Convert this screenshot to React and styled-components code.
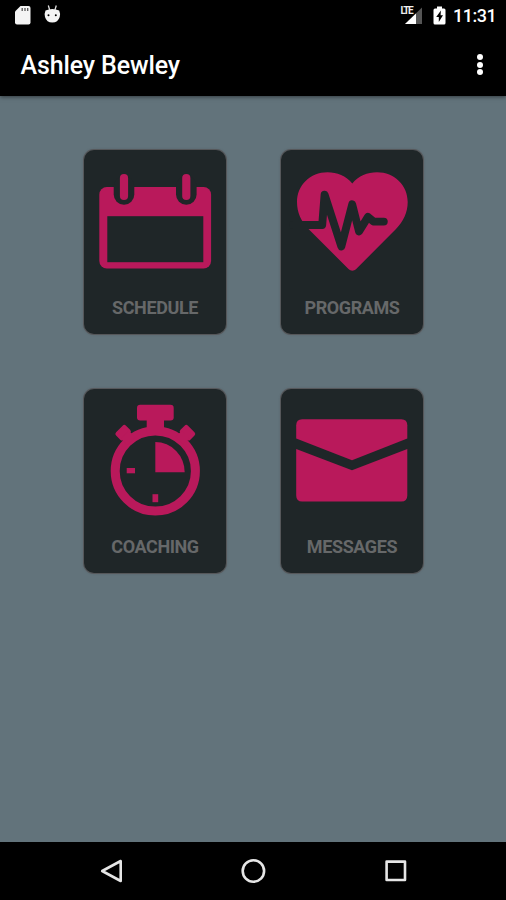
import React from 'react'
import styled, { createGlobalStyle, ThemeProvider } from 'styled-components'

const theme = {
  colors: {
    background: '#62737b',
    card: '#1f2628',
    accent: '#b9195b',
    label: '#666869',
    bar: '#000',
  },
}

const GlobalStyle = createGlobalStyle`
  * {
    box-sizing: border-box;
  }
  body {
    margin: 0;
    font-family: Roboto, sans-serif;
  }
`

const Screen = styled.div`
  width: 506px;
  height: 900px;
  display: flex;
  flex-direction: column;
  overflow: hidden;
  background-color: ${({ theme }) => theme.colors.background};
`

const Header = styled.header`
  height: 96px;
  flex: none;
  background-color: ${({ theme }) => theme.colors.bar};
  color: #fff;
  box-shadow: 0 1px 4px rgba(0, 0, 0, 0.5);
`

const StatusBar = styled.div`
  height: 32px;
  display: flex;
  align-items: center;
  justify-content: space-between;
  padding: 0 10px 0 14px;

  svg {
    display: block;
  }
`

const StatusGroup = styled.div`
  display: flex;
  align-items: center;
`

const Signal = styled.div`
  position: relative;
  margin-right: 10px;
`

const Lte = styled.span`
  position: absolute;
  left: -0.5px;
  top: -1.5px;
  font-size: 10px;
  font-weight: 700;
  line-height: 10px;
  letter-spacing: -1.5px;
  color: #eee;
`

const Battery = styled.svg`
  margin-bottom: 2px;
`

const Clock = styled.span`
  width: 43px;
  margin-left: 7px;
  font-size: 18px;
  font-weight: 500;
  line-height: 32px;
  letter-spacing: -0.5px;
  white-space: nowrap;
`

const ActionBar = styled.div`
  height: 64px;
  display: flex;
  align-items: center;
  justify-content: space-between;
  padding: 0 22.5px 0 20.5px;
`

const Title = styled.h1`
  margin: 4px 0 0;
  font-size: 25px;
  font-weight: 500;
  line-height: 30px;
  letter-spacing: -0.12px;
`

const Menu = styled.div`
  display: flex;
  flex-direction: column;
  gap: 1.3px;
  padding: 1px 1px 0;

  i {
    width: 6px;
    height: 6px;
    border-radius: 50%;
    background-color: #fff;
  }
`

const Grid = styled.main`
  flex: 1;
  display: grid;
  grid-template-columns: repeat(2, 142px);
  grid-auto-rows: 184px;
  gap: 54.5px 55px;
  padding: 54px 0 0 84px;
`

const UICard = styled.div`
  display: flex;
  flex-direction: column;
  border-radius: 10px;
  box-shadow: 0 0 0 1px #55575a, 0 0 3px rgba(60, 50, 50, 0.4);
  background-color: ${({ theme }) => theme.colors.card};
  fill: ${({ theme }) => theme.colors.accent};

  svg {
    display: block;
    flex: none;
  }
`

const UICardTitle = styled.h3`
  margin: 7px 0 0;
  text-align: center;
  font-size: 18px;
  font-weight: 700;
  line-height: 22px;
  letter-spacing: -0.4px;
  color: ${({ theme }) => theme.colors.label};
`

const NavBar = styled.nav`
  height: 58px;
  flex: none;
  display: flex;
  justify-content: space-between;
  align-items: center;
  padding: 0 98px;
  background-color: ${({ theme }) => theme.colors.bar};
  fill: none;
  stroke: #e6e6e6;
  stroke-width: 2.6;
`

const { card: dark, accent } = theme.colors

const Calendar = () => (
  <svg width="142" height="140" viewBox="0 0 142 140">
    <rect x="15.3" y="37" width="111.8" height="81.5" rx="7.5" />
    <rect x="23.3" y="66.2" width="96" height="46" fill={dark} />
    {[40, 102.3].map(x => (
      <g key={x}>
        <rect x={x - 10.3} y="26" width="20.6" height="28.7" rx="10.2" fill={dark} />
        <rect x={x - 4.1} y="24" width="8.2" height="26" rx="4.1" />
      </g>
    ))}
  </svg>
)

const Heart = () => (
  <svg width="142" height="140" viewBox="0 0 142 140">
    <path d="M71.3 33.5C65 26 56 22.3 46.5 22.3C29 22.3 16 35.5 16 52C16 62 20 71.5 27.5 79L67.5 119C70 121.2 72.7 121.2 75.2 119L115 79C122.5 71.5 126.7 62 126.7 52C126.7 35.5 113.5 22.3 96 22.3C86.5 22.3 77.5 26 71.3 33.5Z" />
    <path
      d="M12 75H41.2L43.6 44.6L60.3 96.4L71.2 54.4L78 81.4L87 66.9L92.5 71.6H102.8"
      fill="none"
      stroke={dark}
      strokeWidth="7.9"
      strokeLinecap="round"
      strokeLinejoin="round"
    />
  </svg>
)

const Stopwatch = () => (
  <svg width="142" height="140" viewBox="0 0 142 140">
    <circle cx="71.3" cy="82" r="40.1" fill="none" stroke={accent} strokeWidth="9" />
    <rect x="53" y="15.7" width="36.7" height="15.8" rx="3.2" />
    <rect x="62.7" y="30" width="17.3" height="13" />
    <g transform="translate(39.6 44.2) rotate(-45)">
      <rect x="-7" y="-6" width="14" height="10.6" rx="2.4" />
      <rect x="-5.4" y="2" width="10.8" height="9" />
    </g>
    <g transform="translate(103 44.2) rotate(45)">
      <rect x="-7" y="-6" width="14" height="10.6" rx="2.4" />
      <rect x="-5.4" y="2" width="10.8" height="9" />
    </g>
    <path d="M71.3 83.2V53A29.6 30 0 0 1 100.7 83.2Z" />
    <rect x="42.7" y="79" width="8.3" height="5.3" />
    <rect x="68.5" y="105.2" width="5.7" height="8" />
  </svg>
)

const Envelope = () => (
  <svg width="142" height="140" viewBox="0 0 142 140">
    <path d="M21.2 30.2H120.3Q126.3 30.2 126.3 36.2V49.4L71 71.2L15.2 49.4V36.2Q15.2 30.2 21.2 30.2Z" />
    <path d="M15.2 60L71 81.2L126.3 60V106.5Q126.3 112.5 120.3 112.5H21.2Q15.2 112.5 15.2 106.5Z" />
  </svg>
)

const items = [
  { name: 'SCHEDULE', icon: Calendar },
  { name: 'PROGRAMS', icon: Heart },
  { name: 'COACHING', icon: Stopwatch },
  { name: 'MESSAGES', icon: Envelope },
]

const Card = ({ name, icon: Icon }) => (
  <UICard>
    <Icon />
    <UICardTitle>{name}</UICardTitle>
  </UICard>
)

const Notifications = () => (
  <svg width="50" height="22" viewBox="0 0 50 22">
    <path d="M6.5 1H14.5Q16.5 1 16.5 3V17.5Q16.5 19.5 14.5 19.5H3Q1 19.5 1 17.5V6.5Z" fill="#f4f4f4" />
    <path d="M8.2 3V6M11 3V6M13.7 3V6" stroke="#555" strokeWidth="1.3" />
    <path d="M34.3 0.5L35.7 5M42.3 0.5L40.9 5" stroke="#ddd" strokeWidth="1.3" />
    <path
      d="M31.5 5.5Q38.3 2.5 45.2 5.5Q46.7 9 45.7 12Q44 17.5 38.3 17.5Q32.6 17.5 31 12Q30 9 31.5 5.5Z"
      fill="#f4f4f4"
    />
    <circle cx="34.5" cy="10.2" r="1" />
    <circle cx="41.8" cy="10.2" r="1" />
  </svg>
)

const App = () => (
  <ThemeProvider theme={theme}>
    <GlobalStyle />
    <Screen>
      <Header>
        <StatusBar>
          <Notifications />
          <StatusGroup>
            <Signal>
              <svg width="22" height="18" viewBox="0 0 22 18">
                <path d="M4 17L21 0.5V17Z" fill="#555" />
                <path d="M4 17L15 6.5V17Z" fill="#fff" />
              </svg>
              <Lte>LTE</Lte>
            </Signal>
            <Battery width="13" height="19" viewBox="0 0 13 19">
              <path
                d="M4 0.5H9V2.5H11Q12.5 2.5 12.5 4V17Q12.5 18.5 11 18.5H2Q0.5 18.5 0.5 17V4Q0.5 2.5 2 2.5H4Z"
                fill="#fff"
              />
              <path d="M7.9 4.5L3.2 11H5.8V16L10 9.2H7.6Z" />
            </Battery>
            <Clock>11:31</Clock>
          </StatusGroup>
        </StatusBar>
        <ActionBar>
          <Title>Ashley Bewley</Title>
          <Menu>
            <i />
            <i />
            <i />
          </Menu>
        </ActionBar>
      </Header>
      <Grid>
        {items.map(item => (
          <Card key={item.name} {...item} />
        ))}
      </Grid>
      <NavBar>
        <svg width="26" height="28" viewBox="0 0 26 28">
          <path d="M22.7 4V24L4.2 14Z" strokeLinejoin="round" />
        </svg>
        <svg width="26" height="28" viewBox="0 0 26 28">
          <circle cx="13.4" cy="14" r="10.7" />
        </svg>
        <svg width="26" height="28" viewBox="0 0 26 28">
          <rect x="4.6" y="4.6" width="18.4" height="18.4" strokeLinejoin="round" />
        </svg>
      </NavBar>
    </Screen>
  </ThemeProvider>
)

export default App
